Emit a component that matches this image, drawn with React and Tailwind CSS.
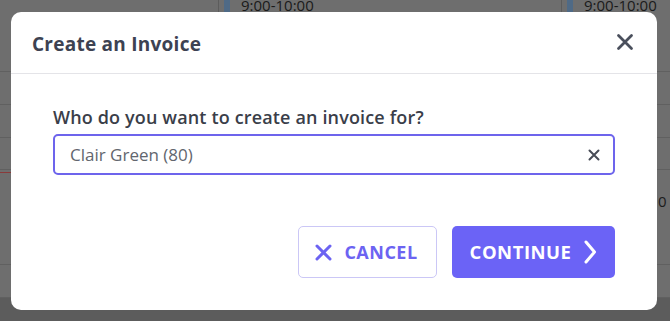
import React from "react";

function BgColumn({ className, event, children }) {
  return (
    <div className={`flex flex-col ${className}`}>
      <div className="h-[72px] border-b border-[#606060] relative">{event}</div>
      <div className="h-[33px] border-b border-[#606060]" />
      <div className="h-[33px] border-b border-[#606060]" />
      <div className="h-[32px] border-b border-[#606060]" />
      <div className="h-[95px] border-b border-[#606060]">{children}</div>
      <div className="h-[33px] border-b border-[#606060]" />
      <div className="flex-1 bg-[#5c5c5c]" />
    </div>
  );
}

function Event() {
  return (
    <div className="flex items-start gap-[11px] pl-[5px] -mt-[3px]">
      <div className="w-[6px] h-[17px] bg-[#4f6a86]" />
      <span className="text-[15px] leading-[17px] text-[#1a1a1a]">9:00-10:00</span>
    </div>
  );
}

export default function App() {
  const font = { fontFamily: "'Open Sans', 'Noto Sans', sans-serif" };
  return (
    <div className="relative w-[670px] h-[321px] overflow-hidden bg-[#6e6e6e]" style={font}>
      {/* background calendar (behind overlay) */}
      <div className="flex h-full">
        <BgColumn className="w-[218px]" />
        <BgColumn className="w-[343px] border-l border-[#5c5c5c]" event={<Event />} />
        <BgColumn className="flex-1 border-l border-[#5c5c5c]" event={<Event />}>
          <div className="pt-[20px] pl-[96px] text-[15px] text-[#1c1c1c]">0</div>
        </BgColumn>
      </div>
      <div className="absolute left-0 top-[172px] w-[11px] h-px bg-[#8a3a3a]" />

      {/* modal */}
      <div className="absolute left-[11px] top-[12px] w-[646px] h-[298px] bg-white rounded-[10px] flex flex-col">
        <div className="h-[62px] flex items-center justify-between pl-[21px] pr-[23px] border-b border-[#e4e4e8] pt-[3px]">
          <h2 className="text-[19px] font-bold text-[#3d4252] tracking-[0.25px]">Create an Invoice</h2>
          <svg width="18" height="18" viewBox="0 0 18 18" className="-mt-[4px]">
            <path d="M2.5 2.5 L15.5 15.5 M15.5 2.5 L2.5 15.5" stroke="#4a4f5c" strokeWidth="2.8" strokeLinecap="round" />
          </svg>
        </div>
        <div className="flex flex-col px-[42px] pt-[31px]">
          <label className="text-[18px] leading-[25px] font-semibold text-[#3a3e49] mb-[4px] tracking-[0.15px]">
            Who do you want to create an invoice for?
          </label>
          <div className="h-[41px] border-2 border-[#6d64ec] rounded-[5px] flex items-center justify-between pl-[15px] pr-[13px]">
            <span className="text-[17px] text-[#62666e]">Clair Green (80)</span>
            <svg width="12" height="12" viewBox="0 0 12 12">
              <path d="M1.5 1.5 L10.5 10.5 M10.5 1.5 L1.5 10.5" stroke="#474b56" strokeWidth="2" strokeLinecap="round" />
            </svg>
          </div>
          <div className="flex justify-end gap-[15px] mt-[51px]">
            <button className="w-[139px] h-[52px] border border-[#cbc7f6] rounded-[5px] flex items-center justify-center gap-[12px] bg-white pr-[2px]">
              <svg width="17" height="17" viewBox="0 0 17 17">
                <path d="M2 2 L15 15 M15 2 L2 15" stroke="#6c63f2" strokeWidth="3" strokeLinecap="round" />
              </svg>
              <span className="text-[18px] font-bold text-[#6c63f2] tracking-[0.5px]">CANCEL</span>
            </button>
            <button className="w-[163px] h-[52px] rounded-[5px] bg-[#6b63f6] flex items-center justify-center gap-[12px]">
              <span className="text-[18.5px] font-bold text-white tracking-[0.5px]">CONTINUE</span>
              <svg width="14" height="26" viewBox="0 0 14 26">
                <path d="M3 3 L11.5 13 L3 23" stroke="white" strokeWidth="3" fill="none" strokeLinecap="round" strokeLinejoin="round" />
              </svg>
            </button>
          </div>
        </div>
      </div>
    </div>
  );
}
